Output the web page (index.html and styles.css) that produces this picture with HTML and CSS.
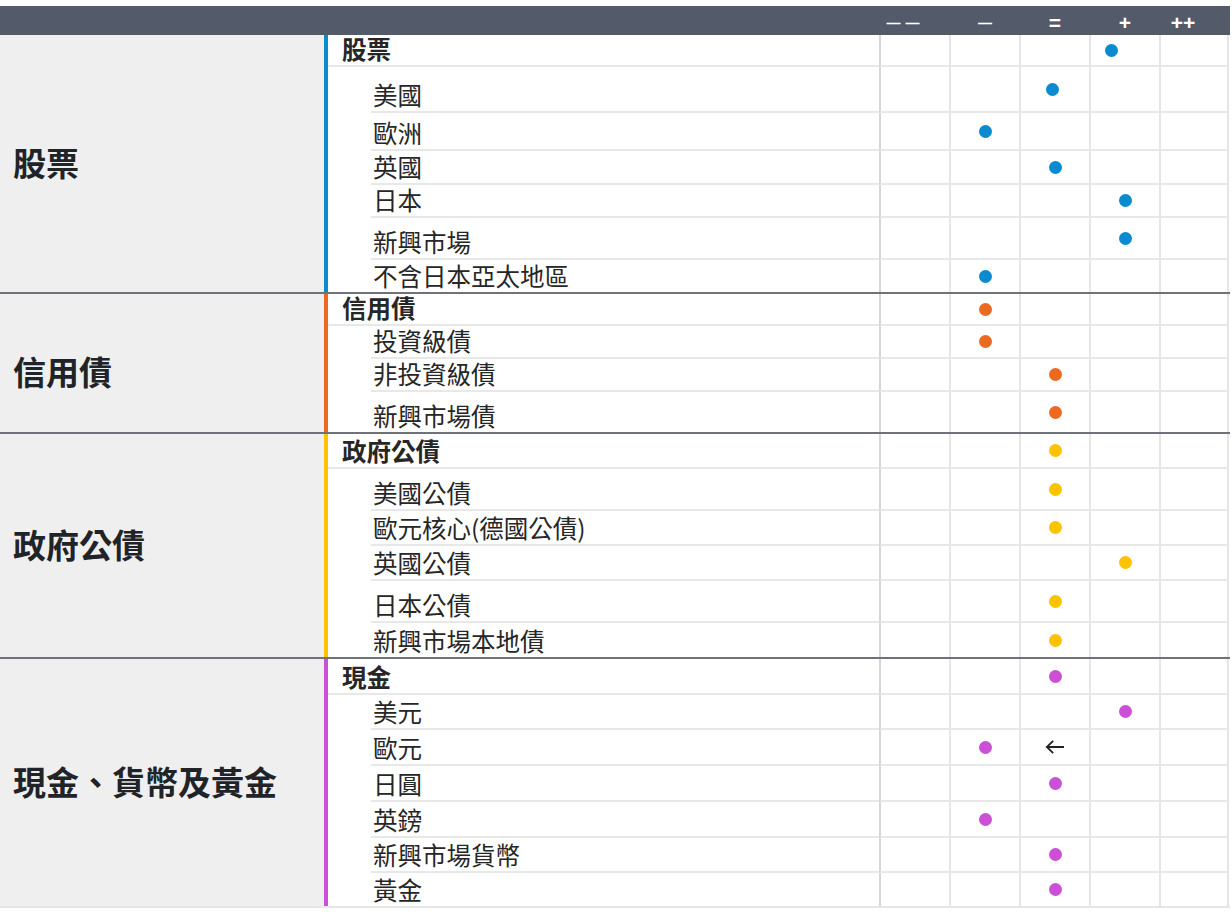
FILE: index.html
```html
<!DOCTYPE html>
<html lang="zh-Hant">
<head>
<meta charset="utf-8">
<title>資產配置觀點</title>
<link rel="stylesheet" href="styles.css">
</head>
<body>
<div class="chart">
  <div class="head">
    <div class="head-spacer"></div>
    <div class="hcell hcell--dash hcell--shift-l">— —</div>
    <div class="hcell hcell--dash">—</div>
    <div class="hcell">=</div>
    <div class="hcell">+</div>
    <div class="hcell hcell--shift-l">++</div>
  </div>

  <section class="group group--equity">
    <div class="group-title">股票</div>
    <div class="group-rows">
      <div class="row h32"><div class="label label--main">股票</div><div class="cell"></div><div class="cell"></div><div class="cell"></div><div class="cell"><span class="dot dot--shift-l"></span></div><div class="cell"></div></div>
      <div class="row h46"><div class="label">美國</div><div class="cell"></div><div class="cell"></div><div class="cell"><span class="dot dot--nudge-l"></span></div><div class="cell"></div><div class="cell"></div></div>
      <div class="row h38"><div class="label">歐洲</div><div class="cell"></div><div class="cell"><span class="dot"></span></div><div class="cell"></div><div class="cell"></div><div class="cell"></div></div>
      <div class="row h34"><div class="label">英國</div><div class="cell"></div><div class="cell"></div><div class="cell"><span class="dot"></span></div><div class="cell"></div><div class="cell"></div></div>
      <div class="row h33"><div class="label">日本</div><div class="cell"></div><div class="cell"></div><div class="cell"></div><div class="cell"><span class="dot"></span></div><div class="cell"></div></div>
      <div class="row h42"><div class="label">新興市場</div><div class="cell"></div><div class="cell"></div><div class="cell"></div><div class="cell"><span class="dot"></span></div><div class="cell"></div></div>
      <div class="row h32"><div class="label">不含日本亞太地區</div><div class="cell"></div><div class="cell"><span class="dot"></span></div><div class="cell"></div><div class="cell"></div><div class="cell"></div></div>
    </div>
  </section>

  <section class="group group--credit">
    <div class="group-title group-title--low">信用債</div>
    <div class="group-rows">
      <div class="row h32"><div class="label label--main">信用債</div><div class="cell"></div><div class="cell"><span class="dot"></span></div><div class="cell"></div><div class="cell"></div><div class="cell"></div></div>
      <div class="row h33"><div class="label">投資級債</div><div class="cell"></div><div class="cell"><span class="dot"></span></div><div class="cell"></div><div class="cell"></div><div class="cell"></div></div>
      <div class="row h33"><div class="label">非投資級債</div><div class="cell"></div><div class="cell"></div><div class="cell"><span class="dot"></span></div><div class="cell"></div><div class="cell"></div></div>
      <div class="row h40"><div class="label">新興市場債</div><div class="cell"></div><div class="cell"></div><div class="cell"><span class="dot"></span></div><div class="cell"></div><div class="cell"></div></div>
    </div>
  </section>

  <section class="group group--gov">
    <div class="group-title">政府公債</div>
    <div class="group-rows">
      <div class="row h35"><div class="label label--main">政府公債</div><div class="cell"></div><div class="cell"></div><div class="cell"><span class="dot"></span></div><div class="cell"></div><div class="cell"></div></div>
      <div class="row h42"><div class="label">美國公債</div><div class="cell"></div><div class="cell"></div><div class="cell"><span class="dot"></span></div><div class="cell"></div><div class="cell"></div></div>
      <div class="row h35"><div class="label">歐元核心(德國公債)</div><div class="cell"></div><div class="cell"></div><div class="cell"><span class="dot"></span></div><div class="cell"></div><div class="cell"></div></div>
      <div class="row h35"><div class="label">英國公債</div><div class="cell"></div><div class="cell"></div><div class="cell"></div><div class="cell"><span class="dot"></span></div><div class="cell"></div></div>
      <div class="row h42"><div class="label">日本公債</div><div class="cell"></div><div class="cell"></div><div class="cell"><span class="dot"></span></div><div class="cell"></div><div class="cell"></div></div>
      <div class="row h34"><div class="label">新興市場本地債</div><div class="cell"></div><div class="cell"></div><div class="cell"><span class="dot"></span></div><div class="cell"></div><div class="cell"></div></div>
    </div>
  </section>

  <section class="group group--cash group--last">
    <div class="group-title">現金、貨幣及黃金</div>
    <div class="group-rows">
      <div class="row h36"><div class="label label--main">現金</div><div class="cell"></div><div class="cell"></div><div class="cell"><span class="dot"></span></div><div class="cell"></div><div class="cell"></div></div>
      <div class="row h35"><div class="label">美元</div><div class="cell"></div><div class="cell"></div><div class="cell"></div><div class="cell"><span class="dot"></span></div><div class="cell"></div></div>
      <div class="row h36"><div class="label">歐元</div><div class="cell"></div><div class="cell"><span class="dot"></span></div><div class="cell"><svg class="arrow" width="20" height="14" viewBox="0 0 20 14" aria-hidden="true"><path d="M19 7H1.8M8.2 0.8L1.8 7L8.2 13.2" fill="none" stroke="#222" stroke-width="1.8"/></svg></div><div class="cell"></div><div class="cell"></div></div>
      <div class="row h36"><div class="label">日圓</div><div class="cell"></div><div class="cell"></div><div class="cell"><span class="dot"></span></div><div class="cell"></div><div class="cell"></div></div>
      <div class="row h36"><div class="label">英鎊</div><div class="cell"></div><div class="cell"><span class="dot"></span></div><div class="cell"></div><div class="cell"></div><div class="cell"></div></div>
      <div class="row h35"><div class="label">新興市場貨幣</div><div class="cell"></div><div class="cell"></div><div class="cell"><span class="dot"></span></div><div class="cell"></div><div class="cell"></div></div>
      <div class="row h33"><div class="label">黃金</div><div class="cell"></div><div class="cell"></div><div class="cell"><span class="dot"></span></div><div class="cell"></div><div class="cell"></div></div>
    </div>
  </section>
</div>
</body>
</html>
```

FILE: styles.css
```css
* { box-sizing: border-box; }

html, body {
  margin: 0;
  padding: 0;
  background: #ffffff;
}

body {
  font-family: "Noto Sans CJK TC", "Noto Sans", sans-serif;
  color: #252525;
}

.chart {
  width: 1230px;
  padding-top: 6px;
}

/* header */
.head {
  display: grid;
  grid-template-columns: 880px repeat(5, 70px);
  height: 29px;
  background: #535b6b;
  color: #ffffff;
  font-family: "Liberation Sans", Arial, sans-serif;
  font-weight: 700;
}

.hcell {
  display: flex;
  align-items: center;
  justify-content: center;
  padding-top: 4px;
  font-size: 21px;
  line-height: 1;
}

.hcell--dash {
  font-size: 14px;
  word-spacing: 1px;
}

.hcell--shift-l {
  padding-right: 24px;
}

/* groups */
.group {
  display: grid;
  grid-template-columns: 324px 1fr;
  border-bottom: 2px solid #6f7379;
}

.group--last {
  border-bottom: 2px solid #e6e6e6;
}

.group-title {
  display: flex;
  align-items: center;
  padding-left: 13px;
  padding-bottom: 4px;
  background: #efefef;
  font-size: 33px;
  font-weight: 700;
  line-height: 40px;
  color: #202428;
}

.group-title--low {
  padding-top: 16px;
  padding-bottom: 0;
}

.group-rows {
  border-left: 4px solid #0a8acf;
}

.group--credit .group-rows { border-left-color: #ec6a1f; }
.group--gov .group-rows { border-left-color: #fdc300; }
.group--cash .group-rows { border-left-color: #cc50d6; }

/* rows */
.row {
  display: grid;
  grid-template-columns: 551px repeat(5, 70px);
}

.h32 { height: 32px; }
.h33 { height: 33px; }
.h34 { height: 34px; }
.h35 { height: 35px; }
.h36 { height: 36px; }
.h38 { height: 38px; }
.h40 { height: 40px; }
.h42 { height: 42px; }
.h46 { height: 46px; }

.label {
  display: flex;
  align-items: flex-end;
  margin-left: 43px;
  padding-left: 2px;
  padding-bottom: 4px;
  border-bottom: 2px solid #e8e8e8;
  font-size: 24.5px;
  line-height: 24px;
  white-space: nowrap;
  color: #262626;
}

.label--main {
  margin-left: 0;
  padding-left: 14px;
  font-weight: 700;
}

.cell {
  display: flex;
  align-items: center;
  justify-content: center;
  border-left: 2px solid #e6e6e6;
  border-bottom: 2px solid #e8e8e8;
}

.cell:nth-child(2) {
  border-left-color: #d6d6d6;
}

.cell:last-child {
  border-right: 2px solid #e6e6e6;
}

.row:last-child .label,
.row:last-child .cell {
  border-bottom: none;
}

/* markers */
.dot {
  display: block;
  width: 13px;
  height: 13px;
  border-radius: 50%;
  background: #0a8acf;
}

.group--credit .dot { background: #ec6a1f; }
.group--gov .dot { background: #fdc300; }
.group--cash .dot { background: #cc50d6; }

.dot--shift-l { margin-right: 28px; }
.dot--nudge-l { margin-right: 6px; }

.arrow {
  display: block;
}
```
